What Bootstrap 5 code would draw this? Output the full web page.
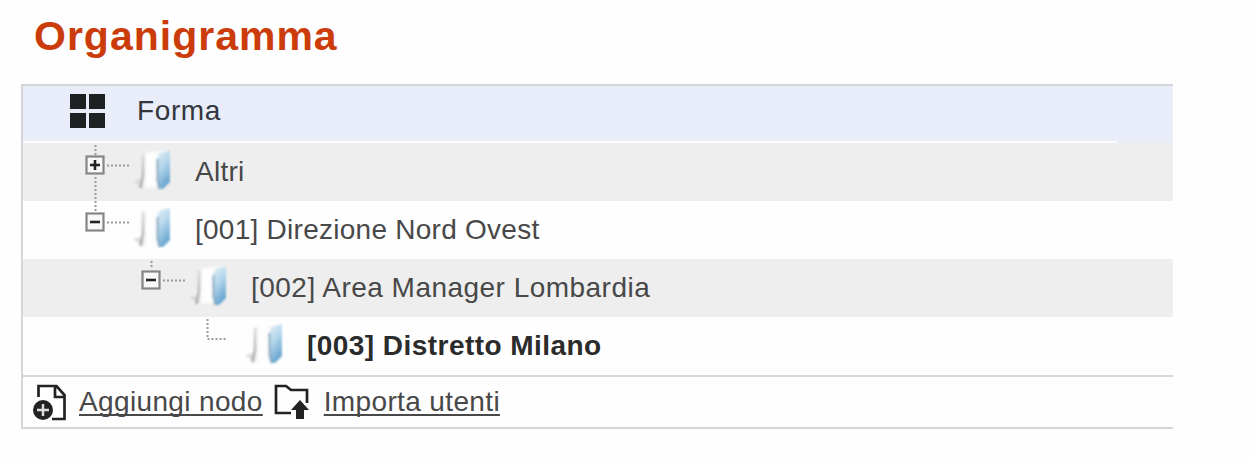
<!DOCTYPE html>
<html lang="it">
<head>
<meta charset="utf-8">
<meta name="viewport" content="width=device-width, initial-scale=1">
<title>Organigramma</title>
<link href="https://cdn.jsdelivr.net/npm/bootstrap@5.3.0/dist/css/bootstrap.min.css" rel="stylesheet">
<style>
body{font-family:"Liberation Sans",Arial,sans-serif;font-size:28px;line-height:32px;color:#484848;background:#fefefe;overflow:hidden}
.page-title{font-size:41px;line-height:46px;letter-spacing:1px;color:#cc3c0a;padding:13px 0 0 34px;height:84px}
.org-panel{width:1152px;margin-left:21px;border:2px solid #d4d5d9;border-right:0}
.root-row{height:57px;background:#e8edf9;color:#33363d;padding-left:47px}
.root-row svg{margin:8px 31px 0 0}
.root-row span{padding-top:9px;letter-spacing:.6px}
.root-rule{height:2px;width:1094px;background:#fcfdff;margin-top:-2px}
.node-row{height:58px}
.node-row.alt{background:#eee}
.node-row>span{padding-top:13px;margin-left:24px;letter-spacing:.26px}
.level-1{padding-left:57px}.level-2{padding-left:113px}.level-3{padding-left:169px}
.level-2>span{letter-spacing:.47px}
.level-3>span{letter-spacing:.45px;color:#2b2b2b}
.glyph{margin-top:5px}
.dots{fill:none;stroke:#999;stroke-width:2;stroke-dasharray:2 2}
.actions{height:52px;border-top:2px solid #d7d7d7;padding-left:9px;letter-spacing:.36px}
.actions a{color:#484848;margin-left:11px;text-decoration-thickness:2px;text-underline-offset:3px;text-decoration-skip-ink:none}
.actions a,.actions svg{flex:none}
</style>
</head>
<body>
<svg width="0" height="0" class="position-absolute">
<defs>
<linearGradient id="blue" x1="0" y1="0" x2=".4" y2="1"><stop offset="0" stop-color="#e4f1f9"/><stop offset=".5" stop-color="#b5d7ec"/><stop offset="1" stop-color="#6ba7d0"/></linearGradient>
<linearGradient id="paper" x1="0" x2="1"><stop offset="0" stop-color="#e4e4e4"/><stop offset=".25" stop-color="#fff"/><stop offset="1" stop-color="#f8f8f9"/></linearGradient>
<linearGradient id="edge" x1="0" y1="0" x2="0" y2="1"><stop offset="0" stop-color="#dcdddd"/><stop offset="1" stop-color="#a4a5a6"/></linearGradient>
<filter id="soft" x="-20%" y="-20%" width="140%" height="140%"><feGaussianBlur stdDeviation=".8"/></filter>
<symbol id="folder" viewBox="0 0 38 44">
<g filter="url(#soft)">
<path d="M0 33 8 31v8Z" fill="#dcdcdd"/>
<path d="M10 5 35 2v34L24 39 8 40 9 30Z" fill="url(#paper)"/>
<path d="M10 6v21L7.500 40" fill="none" stroke="url(#edge)" stroke-width="2.600"/>
<path d="M24 11 26 5 37 2v32l-7 7h-5Z" fill="url(#blue)"/>
<path d="M24.500 11v22l2 8" fill="none" stroke="#8fafc2" stroke-width="2.200"/>
</g>
</symbol>
<symbol id="box" viewBox="0 0 20 20"><rect x="1.5" y="1.5" width="17" height="17" fill="#f8f8f8" stroke="#858585" stroke-width="2.2"/><path d="M5 10h10" stroke="#222" stroke-width="2.6"/></symbol>
</defs>
</svg>
<h1 class="page-title fw-bold m-0">Organigramma</h1>
<main class="org-panel">
<div class="root-row d-flex align-items-start">
<svg width="36" height="35" viewBox="0 0 36 35" fill="#1e2022"><path d="M0 0h16v15H0zM19 0h16v15H19zM0 19h16v15H0zM19 19h16v15H19z"/></svg>
<span>Forma</span>
</div>
<div class="root-rule"></div>
<div class="node-row alt level-1 d-flex">
<svg width="53" height="58" class="flex-shrink-0"><path class="dots" d="M15.500 2v10M15.500 34v24M27 22.500h22"/><use href="#box" x="5" y="12" width="20" height="20"/><path d="M15 17v10" stroke="#222" stroke-width="2.600"/></svg>
<svg width="38" height="44" class="flex-shrink-0 glyph"><use href="#folder"/></svg>
<span>Altri</span>
</div>
<div class="node-row level-1 d-flex">
<svg width="53" height="58" class="flex-shrink-0"><path class="dots" d="M15.500 0v11M27 21.500h22"/><use href="#box" x="5" y="11" width="20" height="20"/></svg>
<svg width="38" height="44" class="flex-shrink-0 glyph"><use href="#folder"/></svg>
<span>[001] Direzione Nord Ovest</span>
</div>
<div class="node-row alt level-2 d-flex">
<svg width="53" height="58" class="flex-shrink-0"><path class="dots" d="M15.500 2v8M27 21.500h22"/><use href="#box" x="5" y="11" width="20" height="20"/></svg>
<svg width="38" height="44" class="flex-shrink-0 glyph"><use href="#folder"/></svg>
<span>[002] Area Manager Lombardia</span>
</div>
<div class="node-row level-3 d-flex">
<svg width="53" height="58" class="flex-shrink-0"><path class="dots" d="M15.500 2v20h20"/></svg>
<svg width="38" height="44" class="flex-shrink-0 glyph"><use href="#folder"/></svg>
<span class="fw-bold">[003] Distretto Milano</span>
</div>
<div class="actions d-flex align-items-center">
<svg width="36" height="38" viewBox="0 0 36 38" fill="none" stroke="#222" stroke-width="2.700"><path d="M6.500 14V3h18l8 9v24H20M23 3v11h10"/><circle cx="11" cy="27" r="10" fill="#222" stroke="none"/><path d="M11 21v12M5 27h12" stroke="#ddd" stroke-width="2.500"/></svg>
<a href="#">Aggiungi nodo</a>
<svg width="38" height="38" viewBox="0 0 38 38" fill="none" stroke="#222" stroke-width="2.700" class="ms-2"><path d="M20 30H5V3h10l5 4h16v13"/><path d="m29 17 9 10h-5v9h-8v-9h-5Z" fill="#222" stroke="none"/></svg>
<a href="#" class="ps-1">Importa utenti</a>
</div>
</main>
<script src="https://cdn.jsdelivr.net/npm/bootstrap@5.3.0/dist/js/bootstrap.bundle.min.js"></script>
</body>
</html>
